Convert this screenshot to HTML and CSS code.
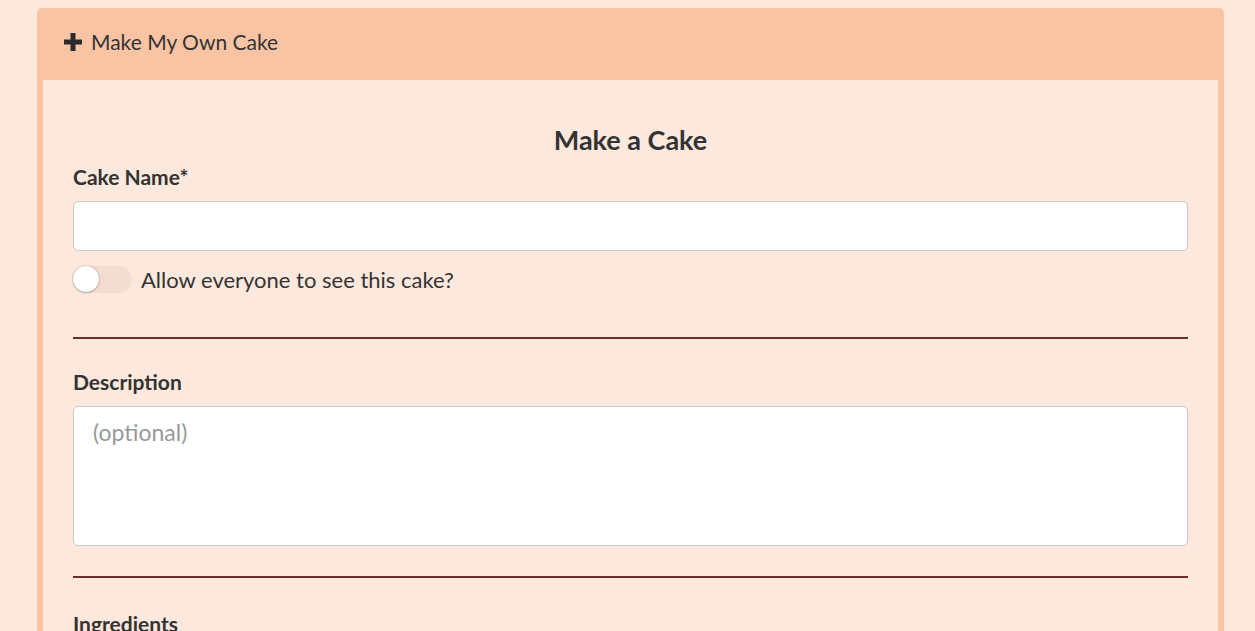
FILE: index.html
```html
<!DOCTYPE html>
<html>
<head>
<meta charset="utf-8">
<link rel="stylesheet" href="styles.css">
</head>
<body>
<div class="card">
  <div class="card-header">
    <svg class="plus" viewBox="0 0 18 18" width="18" height="18"><path d="M6.5 0h5v6.5H18v5h-6.5V18h-5v-6.5H0v-5h6.5z" fill="#2b2b2b"/></svg>
    <span>Make My Own Cake</span>
  </div>
  <div class="card-body">
    <h2 class="title">Make a Cake</h2>
    <label class="label">Cake Name*</label>
    <input class="input" type="text">
    <div class="toggle-row">
      <span class="toggle"><span class="knob"></span></span>
      <span class="toggle-text">Allow everyone to see this cake?</span>
    </div>
    <hr class="divider">
    <label class="label">Description</label>
    <textarea class="textarea" placeholder="(optional)"></textarea>
    <hr class="divider">
    <label class="label">Ingredients</label>
  </div>
</div>
</body>
</html>
```
FILE: styles.css
```css
html, body { margin: 0; padding: 0; }
body {
  background: #fce8dc;
  font-family: "Lato", "Open Sans", sans-serif;
  color: #333;
  height: 631px;
  overflow: hidden;
}
.card {
  margin: 8px 31px 0 37px;
}
.card-header {
  height: 72px;
  box-sizing: border-box;
  background: #f8c4a4;
  border-radius: 5px 5px 0 0;
  display: flex;
  align-items: center;
  padding: 0 0 5px 27px;
  gap: 9px;
  font-size: 21px;
  color: #333;
}
.plus { display: block; margin-top: 1px; }
.card-body {
  border-left: 6px solid #f8c4a4;
  border-right: 6px solid #f8c4a4;
  padding: 40px 30px 0 30px;
  display: flex;
  flex-direction: column;
}
.title {
  margin: 0 0 5px;
  text-align: center;
  font-size: 27px;
  font-weight: 700;
  color: #333;
  line-height: 40px;
}
.label {
  font-weight: 700;
  font-size: 21px;
  line-height: 24px;
  color: #333;
  margin-bottom: 12px;
}
.input {
  height: 50px;
  box-sizing: border-box;
  border: 1px solid #c8c8c8;
  border-radius: 5px;
  background: #fff;
  margin: 0;
  font: inherit;
}
.toggle-row {
  display: flex;
  align-items: center;
  margin-top: 15px;
  gap: 9px;
  font-size: 22px;
  color: #333;
}
.toggle {
  width: 59px;
  height: 27px;
  border-radius: 14px;
  background: #f3ddd0;
  position: relative;
  flex: none;
}
.knob {
  position: absolute;
  left: 0;
  top: 0;
  width: 26px;
  height: 26px;
  border-radius: 50%;
  background: #fff;
  box-shadow: 0 0 2px rgba(0,0,0,0.3), 0 1px 2px rgba(0,0,0,0.2);
}
.divider {
  border: 0;
  border-top: 2px solid #6e2b2b;
  margin: 44px 0 31px;
  height: 0;
}
.textarea {
  height: 140px;
  box-sizing: border-box;
  border: 1px solid #c8c8c8;
  border-radius: 5px;
  background: #fff;
  resize: none;
  padding: 11px 19px;
  font: inherit;
  font-size: 23px;
  margin: 0;
}
.textarea::placeholder { color: #999; }
.textarea + .divider { margin-top: 30px; margin-bottom: 34px; }
```
